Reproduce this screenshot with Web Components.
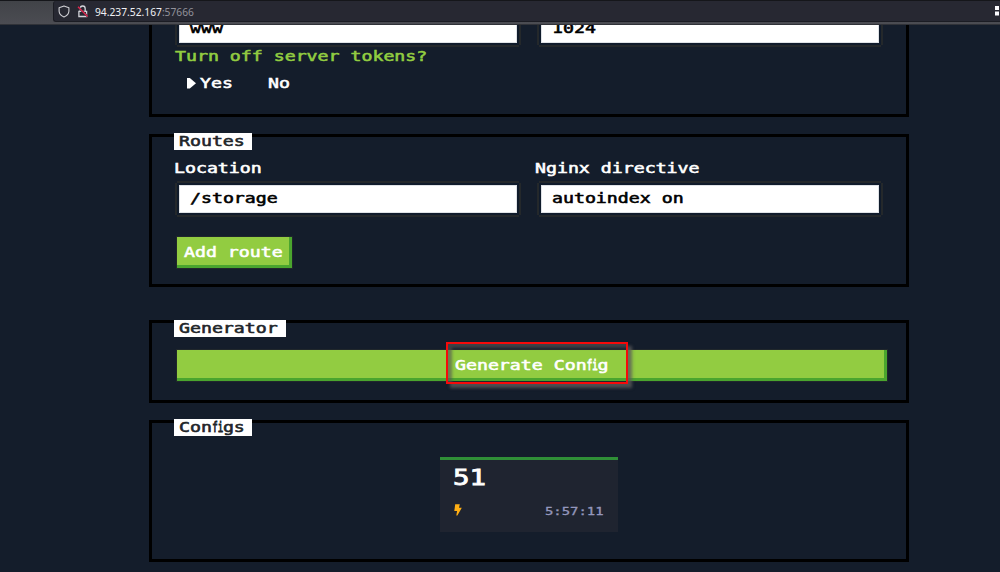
<!DOCTYPE html>
<html lang="en">
<head>
<meta charset="utf-8">
<title>Nginx config generator</title>
<style>
html,body{margin:0;height:572px;overflow:hidden;background:#141d2b}
</style>
</head>
<body>
<config-app></config-app>
<script>
const define = (name, css, html) => customElements.define(name, class extends HTMLElement {
  constructor() {
    super();
    this.attachShadow({mode: 'open'}).innerHTML = `<style>*{box-sizing:border-box}${css}</style>${html}`;
  }
});

// Wide console lettering: an 11px cell at the base size
define('pixel-text', `
:host{display:block;box-sizing:border-box;font:13.7px/16px "DejaVu Sans Mono",monospace;white-space:pre;height:16px;transform:scaleX(1.331);transform-origin:0 0;width:max-content;-webkit-text-stroke:.55px currentColor}
`, `<slot></slot>`);

define('address-bar', `
:host{display:flex;height:25px;background:linear-gradient(#414348,#4b4c52);padding-left:53px;border-top:1px solid #15161a;border-bottom:1px solid #303238;box-sizing:border-box;position:relative;z-index:2}
.url{flex:1;height:21px;background:#272832;border:1px solid #1b1c23;border-top:0;border-right:0;border-radius:3px 0 0 3px;display:flex;align-items:center;padding:0 0 0 4px}
svg{display:block;flex:none}
.lock{margin:0 6px 0 7px}
.txt{font:10.25px/20px "Noto Sans","Open Sans",sans-serif;color:#f0f0f4;flex:1;white-space:nowrap;padding-top:1px}
.txt span{color:#92929b}
`, `<div class="url">
<svg width="12" height="13" viewBox="0 0 12 13" fill="none" stroke="#d0d0d5" stroke-width="1.1"><path d="M6 1 L10.9 2.8 V6.2 C10.7 9 8.8 10.8 6 12 C3.2 10.8 1.3 9 1.1 6.2 V2.8 Z" stroke-linejoin="round"/></svg>
<svg class="lock" width="12" height="13" viewBox="0 0 12 13" fill="none"><path d="M3.2 6 V3.8 A2.5 2.8 0 0 1 8.2 3.8 V6 M1.9 6.3 H9.6 V11.5 H1.9 Z" stroke="#d4d4da" stroke-width="1.3"/><path d="M1 1.8 L10.6 11.4" stroke="#272832" stroke-width="2"/><path d="M1 1.8 L10.6 11.4" stroke="#e22850" stroke-width="1.4"/></svg>
<div class="txt">94.237.52.167<span>:57666</span></div>
<svg width="6" height="12" viewBox="0 0 6 12"><path d="M1 1h4v4H1zM1 6.5h4v4H1z" fill="#fbfbfe"/></svg>
</div>`);

define('nes-panel', `
:host{display:block;box-sizing:border-box;width:760px;border:3px solid #000;padding:0 19px 0 22px}
::slotted([slot=legend]){display:block}
`, `<slot name="legend"></slot><slot></slot>`);

define('panel-legend', `
:host{box-sizing:border-box;height:17px;background:#fff;color:#212529;padding-left:5px;overflow:hidden;margin-top:-4px}
`, `<pixel-text><slot></slot></pixel-text>`);

define('text-field', `
:host{display:block;box-sizing:border-box;width:338px;height:28px;padding:5px 0 0 11px;background:#fff;color:#000;box-shadow:inset 0 0 0 1px #dfe2e6,0 0 0 2px #101b2b,-2px 0 0 2px #24282b,2px 0 0 2px #24282b,0 -2px 0 2px #24282b,0 2px 0 2px #24282b}
`, `<pixel-text><slot></slot></pixel-text>`);

define('nes-button', `
:host{display:block;box-sizing:border-box;height:31px;background:#92cc41;color:#fff;box-shadow:inset -3px -3px #4aa52e,0 0 0 1px #20272b;padding:7px 0 0 var(--pad,8px)}
`, `<pixel-text><slot></slot></pixel-text>`);

define('config-card', `
:host{display:grid;box-sizing:border-box;grid-template:46px 1fr / 1fr 59px;width:178px;height:75px;background:#1f2430;border-top:3px solid #2f8f37;padding:0 14px 0 13px}
.num{font-size:20.6px;line-height:24px;height:24px;color:#fff;margin-top:6px;grid-column:1/3;-webkit-text-stroke-width:.8px}
.time{font-size:10.45px;line-height:12px;height:12px;color:#9497bd;margin-top:-1px;-webkit-text-stroke-width:.3px}
svg{display:block;margin:-2px 0 0 .5px}
`, `<pixel-text class="num">51</pixel-text>
<svg width="8" height="12" viewBox="0 0 8 12"><path d="M1.2 0.3H5.8L5 3.8H7.8L3.4 11.6H2.3L3.1 7H0.3Z" fill="#ffaf14"/></svg>
<pixel-text class="time">5:57:11</pixel-text>`);

define('config-app', `
:host{display:block;width:1000px;height:572px;overflow:hidden;background:#141d2b;color:#fff}
main{display:flex;flex-direction:column;padding-left:149px}
.row{display:grid;grid-template-columns:362px 338px;padding-left:5px}
.labels{display:grid;grid-template-columns:361px 1fr}
.fi{display:inline-block;width:1ch;transform:scaleX(.5);transform-origin:0 0;-webkit-text-stroke-width:.9px}
.server{height:92px;border-top:0;overflow:hidden}
.server .row{margin-top:-10px}
.question{color:#92cc41;margin:5px 0 0 1px}
.choices{display:flex;margin:11px 0 0 13px}
.choices svg{margin:3px 4px 0 0}
.choices div{width:68px}
.routes{margin-top:17px;height:153px}
.routes .labels{margin:10px 0 9px 0}
.routes nes-button{width:115px;margin:24px 0 0 3px;--pad:7px}
.generator{margin-top:33px;height:83px}
.generate{position:relative;margin:13px 0 0 3px;width:710px}
.generate nes-button{--pad:278px}
.mark{position:absolute;left:269px;top:-8px;width:182px;height:42px;border:2px solid #f60a0a;box-shadow:4px 4px 3px rgba(90,90,90,.8),inset 4px 4px 3px rgba(85,85,85,.65)}
.configs{margin-top:17px;height:142px}
config-card{margin:21px 0 0 266px}
`, `<address-bar></address-bar>
<main>
<nes-panel class="server">
  <div class="row"><text-field>www</text-field><text-field>1024</text-field></div>
  <pixel-text class="question">Turn off server tokens?</pixel-text>
  <div class="choices"><svg width="9" height="11" viewBox="0 0 9 11"><path d="M0 0H2.8L9 5.2L2.8 10.4H0Z" fill="#fff"/></svg><div><pixel-text>Yes</pixel-text></div><pixel-text>No</pixel-text></div>
</nes-panel>
<nes-panel class="routes">
  <panel-legend slot="legend" style="width:78px">Routes</panel-legend>
  <div class="labels"><pixel-text>Location</pixel-text><pixel-text>Nginx directive</pixel-text></div>
  <div class="row"><text-field>/storage</text-field><text-field>autoindex on</text-field></div>
  <nes-button>Add route</nes-button>
</nes-panel>
<nes-panel class="generator">
  <panel-legend slot="legend" style="width:112px;margin-top:-3px">Generator</panel-legend>
  <div class="generate"><nes-button>Generate Con<span class="fi">fi</span>g</nes-button><div class="mark"></div></div>
</nes-panel>
<nes-panel class="configs">
  <panel-legend slot="legend" style="width:78px">Con<span class="fi">fi</span>gs</panel-legend>
  <config-card></config-card>
</nes-panel>
</main>`);
</script>
</body>
</html>
